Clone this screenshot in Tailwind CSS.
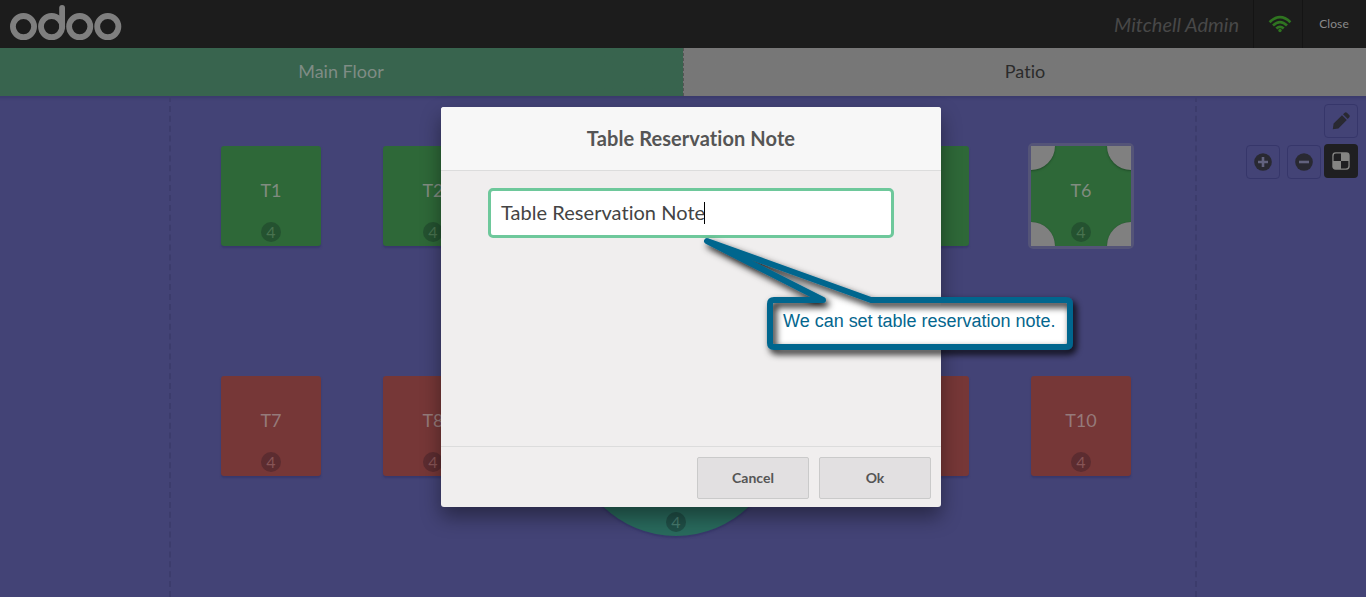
<!DOCTYPE html>
<html lang="en">
<head>
<meta charset="utf-8">
<title>Odoo POS</title>
<script src="https://cdn.jsdelivr.net/npm/@tailwindcss/browser@4"></script>
</head>
<body class="relative h-[597px] w-[1366px] overflow-hidden bg-[#434376] font-['Lato',sans-serif] [font-variant-ligatures:none]">
<div class="flex h-full flex-col">
  <header class="flex h-12 shrink-0 bg-[#1c1c1c]">
    <svg class="ml-[9px] mt-1 h-10 w-[114px]" viewBox="0 0 114 40" fill="none" stroke="#7f7f7f" stroke-width="5.8" stroke-linecap="round">
      <circle cx="14.5" cy="22.6" r="10.6"/><circle cx="42.6" cy="22.6" r="10.6"/><circle cx="70.7" cy="22.6" r="10.6"/><circle cx="98.8" cy="22.6" r="10.6"/>
      <path d="M53.1 22.6V3.9"/>
    </svg>
    <div class="ml-auto flex items-center text-[#7f7f7f]">
      <span class="pr-3.5 text-[20px] italic leading-none text-[#484848]">Mitchell Admin</span>
      <div class="flex h-full w-[49px] items-center justify-center border-l border-[#141414] pl-1">
        <svg class="h-[18px] w-[24px]" viewBox="0 0 24 18" fill="none" stroke="#2f7420" stroke-width="2.7">
          <path d="M1.6 7.2Q12 -2.8 22.4 7.2M5 10.5Q12 3.8 19 10.5M8.3 13.6Q12 10.2 15.7 13.6"/><circle cx="12" cy="15.5" r="1.7" fill="#2f7420" stroke="none"/>
        </svg>
      </div>
      <span class="flex h-full w-[64px] items-center justify-center border-l border-[#141414] pb-px pr-px text-[12px] tracking-[0.1px] text-[#8a8a8a]">Close</span>
    </div>
  </header>
  <nav class="flex h-12 shrink-0 pb-0.5 text-[18px] bg-linear-to-r from-[#38644e] from-50% to-[#777] to-50%">
    <div class="flex w-[683px] items-center justify-center pr-px text-[#7f8c85]">Main Floor</div>
    <div class="-mb-0.5 flex w-[683px] items-center justify-center border-l border-dashed border-[#555] pb-0.5 text-[#2b2b2b]">Patio</div>
  </nav>
  <main class="relative flex-1 bg-[#434376] text-[18px] text-[#808c80] shadow-[inset_0_5px_3px_-3px_#3a3a6c]">
    <div class="absolute inset-y-0 left-[169px] w-[1028px] border-x-2 border-dashed border-[#3c3c6c]"></div>

    <!-- free tables -->
    <div class="absolute left-[221px] top-[50px] flex size-[100px] flex-col items-center rounded-[3px] bg-[#2e6838] pt-[31px] leading-[27px] shadow-[0_2px_2px_#38386c]">T1<span class="mt-[18px] flex size-5 items-center justify-center rounded-full bg-[#245230] pb-0.5 text-[16px] text-[#48724f]">4</span></div>
    <div class="absolute left-[383px] top-[50px] flex size-[100px] flex-col items-center rounded-[3px] bg-[#2e6838] pt-[31px] leading-[27px] shadow-[0_2px_2px_#38386c]">T2<span class="mt-[18px] flex size-5 items-center justify-center rounded-full bg-[#245230] pb-0.5 text-[16px] text-[#48724f]">4</span></div>
    <div class="absolute left-[869px] top-[50px] size-[100px] rounded-[3px] bg-[#2e6838] shadow-[0_2px_2px_#38386c]"></div>

    <!-- selected table with resize handles -->
    <div class="absolute left-[1031px] top-[50px] size-[100px] rounded-[2px] bg-[#2e6838] outline-[3px] outline-[#545478]">
      <div class="relative flex size-full flex-col items-center overflow-hidden pt-[31px] leading-[27px]">
        <i class="absolute -left-6 -top-6 size-12 rounded-full bg-[#808080] shadow-[0_1px_2px_#204a28]"></i>
        <i class="absolute -right-6 -top-6 size-12 rounded-full bg-[#808080] shadow-[0_1px_2px_#204a28]"></i>
        <i class="absolute -bottom-6 -left-6 size-12 rounded-full bg-[#808080] shadow-[0_0_1px_#204a28]"></i>
        <i class="absolute -bottom-6 -right-6 size-12 rounded-full bg-[#808080] shadow-[0_0_1px_#204a28]"></i>
        T6<span class="mt-[18px] flex size-5 items-center justify-center rounded-full bg-[#245230] pb-0.5 text-[16px] text-[#48724f]">4</span>
      </div>
    </div>

    <!-- occupied tables -->
    <div class="absolute left-[221px] top-[280px] flex size-[100px] flex-col items-center rounded-[3px] bg-[#763737] pt-[31px] leading-[27px] text-[#957a7a] shadow-[0_2px_2px_#38386c]">T7<span class="mt-[18px] flex size-5 items-center justify-center rounded-full bg-[#5c2c30] pb-0.5 text-[16px] text-[#875456]">4</span></div>
    <div class="absolute left-[383px] top-[280px] flex size-[100px] flex-col items-center rounded-[3px] bg-[#763737] pt-[31px] leading-[27px] text-[#957a7a] shadow-[0_2px_2px_#38386c]">T8<span class="mt-[18px] flex size-5 items-center justify-center rounded-full bg-[#5c2c30] pb-0.5 text-[16px] text-[#875456]">4</span></div>
    <div class="absolute left-[869px] top-[280px] size-[100px] rounded-[3px] bg-[#763737] shadow-[0_2px_2px_#38386c]"></div>
    <div class="absolute left-[1031px] top-[280px] flex size-[100px] flex-col items-center rounded-[3px] bg-[#763737] pt-[31px] leading-[27px] text-[#957a7a] shadow-[0_2px_2px_#38386c]">T10<span class="mt-[18px] flex size-5 items-center justify-center rounded-full bg-[#5c2c30] pb-0.5 text-[16px] text-[#875456]">4</span></div>
    <div class="absolute left-[571px] top-[230px] flex size-[210px] items-end justify-center rounded-full bg-[#296a5d] pb-1 shadow-[0_2px_2px_#38386c]"><span class="flex size-5 items-center justify-center rounded-full bg-[#205048] text-[16px] text-[#477c70]">4</span></div>

    <!-- floor editing tools -->
    <div class="absolute right-2 top-2 flex flex-col items-end gap-[7px]">
      <div class="flex size-[34px] items-center justify-center rounded-[4px] border border-[#36366a]">
        <svg class="size-[18px]" viewBox="0 0 18 18"><path fill="#292932" d="M.8 17.2L1.6 11.6 10 3.2 14.8 8 6.4 16.4ZM11 2.2L12.7 .7Q13.8 -.2 14.9 .8L17.2 3.1Q18.2 4.2 17.3 5.3L15.8 7Z"/></svg>
      </div>
      <div class="flex">
        <div class="flex size-[34px] items-center justify-center rounded-[4px] border border-[#36366a]">
          <svg class="size-[18px]" viewBox="0 0 18 18"><circle cx="9" cy="9" r="8.8" fill="#292932"/><path d="M9 4V14M4 9H14" stroke="#62627e" stroke-width="2.6"/></svg>
        </div>
        <div class="ml-[7px] flex size-[34px] items-center justify-center rounded-[4px] border border-[#36366a]">
          <svg class="size-[18px]" viewBox="0 0 18 18"><circle cx="9" cy="9" r="8.8" fill="#292932"/><path d="M4 9H14" stroke="#62627e" stroke-width="2.6"/></svg>
        </div>
        <div class="ml-[3px] -mt-px flex size-[34px] items-center justify-center rounded-[4px] bg-[#1f1f21]">
          <svg class="size-[18px]" viewBox="0 0 18 18"><rect x=".3" y=".3" width="17.4" height="17.4" rx="3.4" fill="#858583"/><path fill="#1f1f21" d="M9 9H1.6V4Q1.6 1.6 4 1.6H9ZM9 9H16.4V14Q16.4 16.4 14 16.4H9Z"/></svg>
        </div>
      </div>
    </div>
  </main>
</div>

<!-- dialog -->
<div class="absolute left-[441px] top-[107px] flex h-[400px] w-[500px] flex-col rounded-[3px] bg-[#f0eeee] text-[#555] shadow-[0_10px_20px_rgba(0,0,0,0.4)]">
  <div class="flex h-16 items-center justify-center rounded-t-[3px] border-b border-[#dcdcdc] bg-[#f7f7f7] pb-0.5 text-[20px] font-bold tracking-[0.08px]">Table Reservation Note</div>
  <div class="flex-1 px-[47px] pt-[17px]">
    <div class="flex h-[50px] items-center rounded-[5px] border-3 border-[#6ec89b] bg-white px-2.5 pb-0.5 text-[20px] tracking-[0.04px] text-[#444]">Table Reservation Note<span class="-ml-px mt-0.5 h-[22px] w-px bg-black"></span></div>
  </div>
  <div class="flex h-[61px] justify-end gap-2.5 border-t border-[#dcdcdc] px-2.5 pt-2.5 text-[14px] font-bold">
    <div class="flex h-[42px] w-28 items-center justify-center rounded-[2px] border border-[#cacaca] bg-[#e2e0e1] pb-0.5">Cancel</div>
    <div class="flex h-[42px] w-28 items-center justify-center rounded-[2px] border border-[#cacaca] bg-[#e2e0e1] pb-0.5">Ok</div>
  </div>
</div>

<!-- annotation callout -->
<svg class="absolute left-[690px] top-[220px] h-[150px] w-[400px]" viewBox="0 0 400 150">
  <defs>
    <filter id="shade" x="-10%" y="-10%" width="125%" height="130%"><feDropShadow dx="3" dy="4" stdDeviation="3.5" flood-color="#000" flood-opacity=".95"/></filter>
    <linearGradient id="paper" gradientUnits="userSpaceOnUse" x1="0" y1="20" x2="0" y2="90"><stop offset=".3" stop-color="#fff" stop-opacity="0"/><stop offset=".95" stop-color="#fff"/></linearGradient>
  </defs>
  <path d="M84 80H133L17 21 181 80H376Q380 80 380 84V123Q380 127 376 127H84Q80 127 80 123V84Q80 80 84 80Z" fill="url(#paper)"/>
  <path filter="url(#shade)" d="M84 80H133L17 21 181 80H376Q380 80 380 84V123Q380 127 376 127H84Q80 127 80 123V84Q80 80 84 80Z" fill="none" stroke="#04668e" stroke-width="6" stroke-linejoin="round"/>
  <text x="93" y="107" textLength="272.5" font-family="Liberation Sans, sans-serif" font-size="18" fill="#04668e">We can set table reservation note.</text>
</svg>
</body>
</html>
